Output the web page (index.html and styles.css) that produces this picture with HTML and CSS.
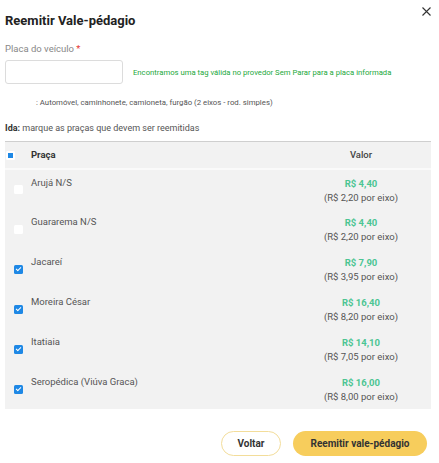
FILE: index.html
```html
<!DOCTYPE html>
<html lang="pt-BR">
<head>
<meta charset="utf-8">
<link rel="stylesheet" href="styles.css">
</head>
<body>
<div class="modal">
  <header class="modal-head">
    <h1 class="title">Reemitir Vale-pédagio</h1>
    <button class="close" aria-label="Fechar">
      <svg width="9" height="9" viewBox="0 0 9 9"><path d="M0.5 0.5L8.5 8.5M8.5 0.5L0.5 8.5" stroke="#333" stroke-width="1.1" fill="none"/></svg>
    </button>
  </header>

  <label class="label">Placa do veículo <span class="req">*</span></label>
  <div class="plate-row">
    <input class="plate" type="text">
    <span class="ok-msg">Encontramos uma tag válida no provedor Sem Parar para a placa informada</span>
  </div>

  <p class="vehicle">: Automóvel, caminhonete, camioneta, furgão (2 eixos - rod. simples)</p>

  <p class="ida"><b>Ida:</b> marque as praças que devem ser reemitidas</p>

  <table class="grid">
    <thead>
      <tr>
        <th class="c-check"><span class="cb indet"></span></th>
        <th class="c-name">Praça</th>
        <th class="c-val">Valor</th>
      </tr>
    </thead>
    <tbody>
      <tr>
        <td class="c-check"><span class="cb"></span></td>
        <td class="c-name">Arujá N/S</td>
        <td class="c-val"><div class="price">R$ 4,40</div><div class="axle">(R$ 2,20 por eixo)</div></td>
      </tr>
      <tr>
        <td class="c-check"><span class="cb"></span></td>
        <td class="c-name">Guararema N/S</td>
        <td class="c-val"><div class="price">R$ 4,40</div><div class="axle">(R$ 2,20 por eixo)</div></td>
      </tr>
      <tr>
        <td class="c-check"><span class="cb on"></span></td>
        <td class="c-name">Jacareí</td>
        <td class="c-val"><div class="price">R$ 7,90</div><div class="axle">(R$ 3,95 por eixo)</div></td>
      </tr>
      <tr>
        <td class="c-check"><span class="cb on"></span></td>
        <td class="c-name">Moreira César</td>
        <td class="c-val"><div class="price">R$ 16,40</div><div class="axle">(R$ 8,20 por eixo)</div></td>
      </tr>
      <tr>
        <td class="c-check"><span class="cb on"></span></td>
        <td class="c-name">Itatiaia</td>
        <td class="c-val"><div class="price">R$ 14,10</div><div class="axle">(R$ 7,05 por eixo)</div></td>
      </tr>
      <tr>
        <td class="c-check"><span class="cb on"></span></td>
        <td class="c-name">Seropédica (Viúva Graca)</td>
        <td class="c-val"><div class="price">R$ 16,00</div><div class="axle">(R$ 8,00 por eixo)</div></td>
      </tr>
    </tbody>
  </table>

  <footer class="actions">
    <button class="btn btn-ghost">Voltar</button>
    <button class="btn btn-primary">Reemitir vale-pédagio</button>
  </footer>
</div>
</body>
</html>
```

FILE: styles.css
```css
* { box-sizing: border-box; }
html, body { margin: 0; background: #fff; }
body { font-family: Roboto, "Noto Sans", Arial, sans-serif; color: #444; }

.modal { padding: 0 8px 0 5px; width: 439px; }

.modal-head { display: flex; justify-content: space-between; align-items: flex-start; height: 38px; }
.title { margin: 13px 0 0; font-size: 13px; font-weight: 700; color: #222; line-height: 16px; }
.close { border: 0; background: none; padding: 0; margin: 7px 0 0; width: 9px; height: 9px; display: block; }
.close svg { display: block; }

.label { display: block; font-size: 9.5px; color: #888; line-height: 12px; margin: 5px 0 0; }
.req { color: #e53935; }

.plate-row { display: flex; align-items: center; margin-top: 5px; gap: 10px; }
.plate { width: 118px; height: 24px; border: 1px solid #dcdcdc; border-radius: 3px; background: #fff; margin: 0; }
.ok-msg { font-size: 7.7px; color: #22a83a; }

.vehicle { margin: 13px 0 0 31px; font-size: 7.8px; color: #555; line-height: 12px; }
.ida { margin: 13px 0 0; font-size: 9px; color: #555; line-height: 12px; }
.ida b { color: #333; }

.grid { width: 426px; border-collapse: collapse; margin-top: 7px; background: #f2f2f2; }
.grid thead tr { border-top: 1px solid #cfcfcf; border-bottom: 2px solid #fafafa; }
.grid th { height: 27px; font-size: 9.5px; font-weight: 700; color: #333; text-align: left; padding: 0; }
.grid th.c-val { font-weight: 500; color: #444; text-align: center; }
.grid td { height: 40px; padding: 0; font-size: 9.5px; color: #555; vertical-align: top; }
.c-check { width: 26px; text-align: center; padding-left: 1px !important; }
.grid td.c-check { vertical-align: middle; }
.c-name { padding-left: 0 !important; }
.grid td.c-name { padding-top: 7px; }
.c-val { width: 140px; text-align: center; }
.grid td.c-val { padding-top: 7px; }

.cb { display: inline-block; width: 9px; height: 9px; border-radius: 1.5px; background: #fff; vertical-align: middle; position: relative; }
.cb.indet::after { content: ""; position: absolute; left: 2px; top: 2px; width: 5px; height: 5px; background: #1e88e5; }
.cb.on { background: #1e88e5; }
.cb.on::after { content: ""; position: absolute; left: 3px; top: 1.2px; width: 2px; height: 4px; border: solid #fff; border-width: 0 1px 1px 0; transform: rotate(45deg); }

.price { font-weight: 700; color: #4cc592; line-height: 14px; }
.axle { color: #555; line-height: 14px; }

.actions { display: flex; justify-content: flex-end; gap: 12px; margin-top: 22px; padding-right: 4px; }
.btn { height: 25px; border-radius: 13px; font-family: inherit; font-size: 10px; font-weight: 700; color: #333; padding: 0 16px; }
.btn-ghost { background: #fff; border: 1px solid #f3dd9a; width: 60px; padding: 0; }
.btn-primary { background: #f7cd5c; border: 0; width: 134px; padding: 0; }
```
